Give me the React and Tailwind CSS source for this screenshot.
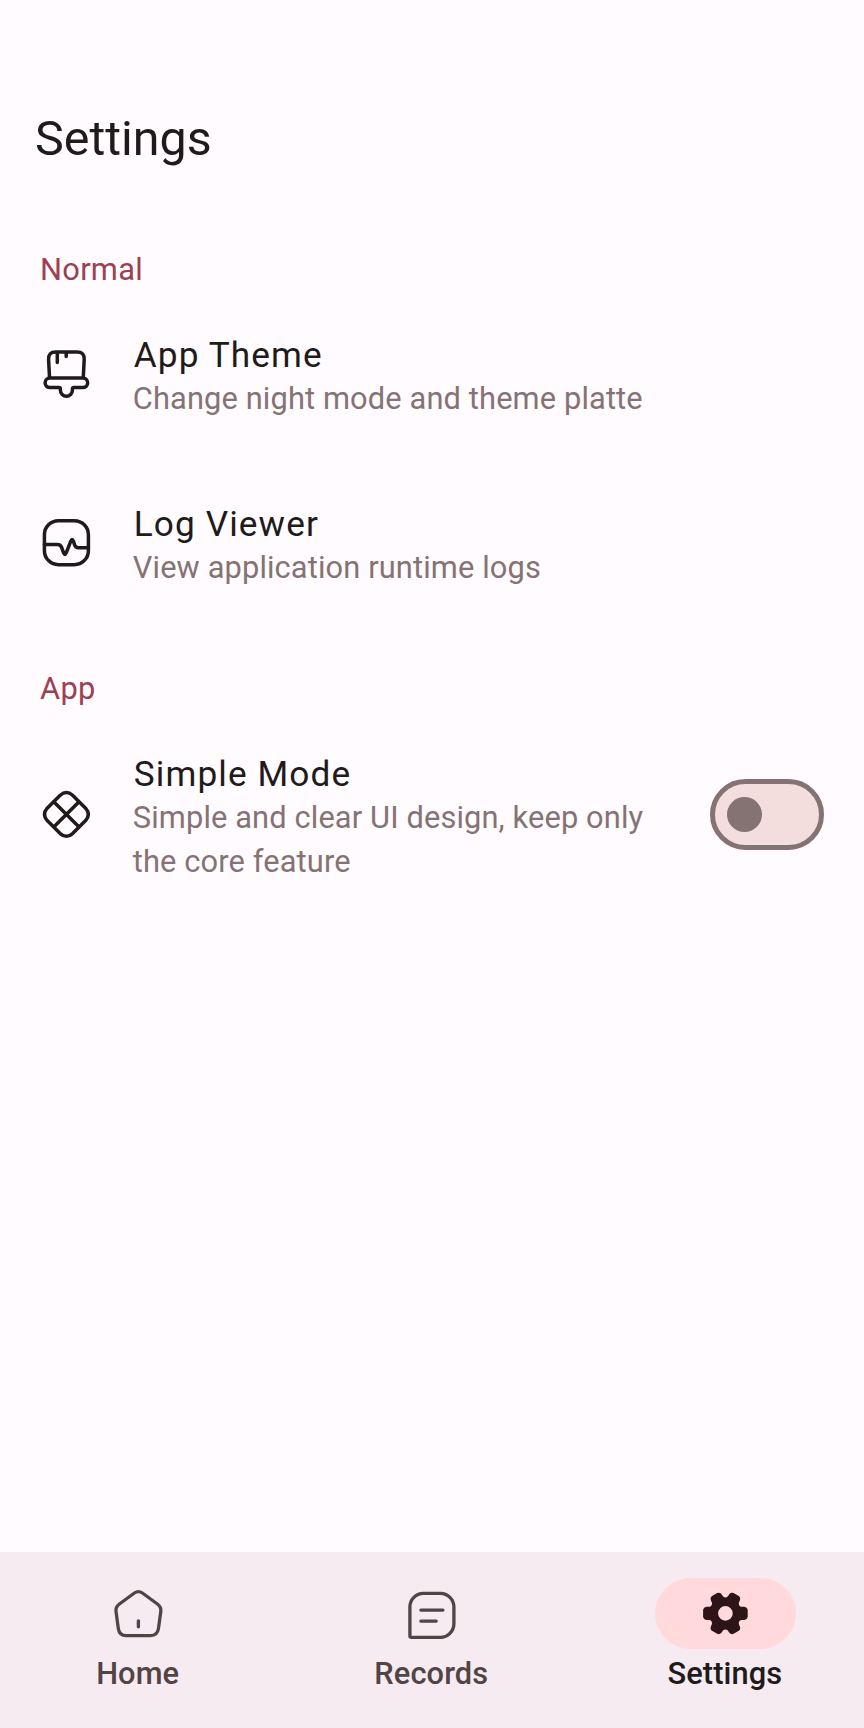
const stroke = {
  fill: 'none',
  stroke: 'currentColor',
  strokeLinecap: 'round',
  strokeLinejoin: 'round',
}

function ThemeIcon() {
  return (
    <svg viewBox="0 1 52.8 52.8" className="size-[52.8px]" strokeWidth="3.5" {...stroke}>
      <path d="M9.5 31 L8.6 13.6 Q8.2 6 15.6 6 H37.2 Q44.6 6 44.2 13.6 L43.3 31" />
      <path d="M17.3 6.5 V16.6 M26.2 6.5 V10.4" />
      <path d="M9.9 32 H42.9 A4.8 4.8 0 0 1 42.9 41.6 H34 Q32.4 41.6 32.4 43.2 V44.2 A6 6 0 0 1 20.4 44.2 V43.2 Q20.4 41.6 18.8 41.6 H9.9 A4.8 4.8 0 0 1 9.9 32 Z" />
    </svg>
  )
}

function LogIcon() {
  return (
    <svg viewBox="0 -0.3 52.8 52.8" className="size-[52.8px]" strokeWidth="3.5" {...stroke}>
      <rect x="4.4" y="4.4" width="44" height="44" rx="14" />
      <path d="M4.4 28.2 H17.4 Q20.6 28.2 21.6 31 L23.6 36.6 Q24.9 39.6 26.2 36.6 L30.8 24.8 Q32.1 21.8 33.4 24.8 L34.6 28.6 Q35.6 31.4 38.4 31.4 H48.4" />
    </svg>
  )
}

function SimpleIcon() {
  return (
    <svg viewBox="0 0 52.8 52.8" className="size-[52.8px]" strokeWidth="3.5" {...stroke}>
      <path d="M20.2 7.2 Q26.4 1.8 32.6 7.2 L45.6 20.2 Q51 26.4 45.6 32.6 L32.6 45.6 Q26.4 51 20.2 45.6 L7.2 32.6 Q1.8 26.4 7.2 20.2 Z" />
      <path d="M14 14 L38.8 38.8 M38.8 14 L14 38.8" />
    </svg>
  )
}

function HomeIcon() {
  return (
    <svg viewBox="0 -1.2 52.8 52.8" className="size-[52.8px]" strokeWidth="3.3" {...stroke}>
      <path d="M22.4 4.8 Q26.4 2 30.4 4.8 L45.4 15.8 Q49.4 18.8 48.8 23.2 L46.5 40.2 Q45.4 47.4 38.6 47.4 H14.2 Q7.4 47.4 6.3 40.2 L4 23.2 Q3.4 18.8 7.4 15.8 Z" />
      <path d="M26.4 32.6 V38.6" />
    </svg>
  )
}

function RecordsIcon() {
  return (
    <svg viewBox="0.5 -2 52.8 52.8" className="size-[52.8px]" strokeWidth="3.3" {...stroke}>
      <path d="M4.4 18 A13.6 13.6 0 0 1 18 4.4 H34.8 A13.6 13.6 0 0 1 48.4 18 V34.8 A13.6 13.6 0 0 1 34.8 48.4 H6 Q4.4 48.4 4.4 46.8 Z" />
      <path d="M15.4 21.1 H37.4 M15.4 32.1 H30.7" />
    </svg>
  )
}

function GearIcon() {
  return (
    <svg viewBox="-26.4 -26.4 52.8 52.8" className="size-[52.8px]" fill="currentColor">
      <path
        fillRule="evenodd"
        d="M-8.2 -20.4 Q-6 -21.4 -4.2 -19.6 C-2.4 -17 -2 -16 0 -16 S2.4 -17 4.2 -19.6 Q6 -21.4 8.2 -20.4 L13.4 -17.4 Q15.2 -16.2 14.8 -14 C13.6 -11 12.8 -10 13.8 -8.2 S15.8 -6.8 19 -6.6 Q21.8 -6 22.3 -3.6 V3.6 Q21.8 6 19 6.6 C15.8 6.8 14.8 6.4 13.8 8.2 S13.6 11 14.8 14 Q15.2 16.2 13.4 17.4 L8.2 20.4 Q6 21.4 4.2 19.6 C2.4 17 2 16 0 16 S-2.4 17 -4.2 19.6 Q-6 21.4 -8.2 20.4 L-13.4 17.4 Q-15.2 16.2 -14.8 14 C-13.6 11 -12.8 10 -13.8 8.2 S-15.8 6.8 -19 6.6 Q-21.8 6 -22.3 3.6 V-3.6 Q-21.8 -6 -19 -6.6 C-15.8 -6.8 -14.8 -6.4 -13.8 -8.2 S-13.6 -11 -14.8 -14 Q-15.2 -16.2 -13.4 -17.4 Z M7.3 0 A7.3 7.3 0 1 0 -7.3 0 A7.3 7.3 0 1 0 7.3 0 Z"
      />
    </svg>
  )
}

function SectionTitle({ children }) {
  return <h2 className="px-10 text-[30.8px] leading-[44px] tracking-[0.3px] text-[#9c4052]">{children}</h2>
}

function SettingRow({ icon, title, children, action }) {
  return (
    <div className="flex items-center px-10">
      <div className="shrink-0 text-[#201a1b]">{icon}</div>
      <div className="ml-10 w-[540px] pt-[7px]">
        <h3 className="pl-px text-[35.2px] leading-[44px] tracking-[1.1px] text-[#201a1b]">{title}</h3>
        <p className="text-[30.8px] leading-[44px] tracking-[0.13px] text-[#857374]">{children}</p>
      </div>
      {action}
    </div>
  )
}

function NavItem({ icon, label, active }) {
  return (
    <a className={active ? 'flex flex-col items-center text-[#201a1b]' : 'flex flex-col items-center text-[#524344]'}>
      <span
        className={
          active
            ? 'flex h-[70.4px] w-[140.8px] items-center justify-center rounded-full bg-[#ffd9dc] text-[#2c1417]'
            : 'flex h-[70.4px] w-[140.8px] items-center justify-center'
        }
      >
        {icon}
      </span>
      <span className="mt-[5px] pr-[1.4px] text-[30.8px] leading-[40px] font-medium tracking-[0.1px]">{label}</span>
    </a>
  )
}

export default function App() {
  return (
    <div className="flex h-[1728px] w-[864px] flex-col bg-[#fffbff] font-[Roboto,sans-serif]">
      <header className="px-[35px] pt-[107px]">
        <h1 className="text-[48.4px] leading-[64px] text-[#201a1b]">Settings</h1>
      </header>
      <main className="flex-1">
        <div className="mt-[77px]">
          <SectionTitle>Normal</SectionTitle>
        </div>
        <div className="mt-[33.6px] flex flex-col gap-[74px]">
          <SettingRow icon={<ThemeIcon />} title="App Theme">
            Change night mode and theme platte
          </SettingRow>
          <SettingRow icon={<LogIcon />} title="Log Viewer">
            View application runtime logs
          </SettingRow>
        </div>
        <div className="mt-[77.4px]">
          <SectionTitle>App</SectionTitle>
        </div>
        <div className="mt-[34px]">
          <SettingRow
            icon={<SimpleIcon />}
            title="Simple Mode"
            action={
              <button
                role="switch"
                aria-checked="false"
                className="ml-auto flex h-[70.4px] w-[114.4px] shrink-0 items-center rounded-full border-5 border-[#857374] bg-[#f4dddd] pl-[12.6px]"
              >
                <span className="size-[35.2px] rounded-full bg-[#857374]" />
              </button>
            }
          >
            Simple and clear UI design, keep only the core feature
          </SettingRow>
        </div>
      </main>
      <nav className="flex h-[176px] items-start justify-between bg-[#f6ebf0] px-[68px] pt-[26.4px]">
        <NavItem icon={<HomeIcon />} label="Home" />
        <NavItem icon={<RecordsIcon />} label="Records" />
        <NavItem icon={<GearIcon />} label="Settings" active />
      </nav>
    </div>
  )
}
